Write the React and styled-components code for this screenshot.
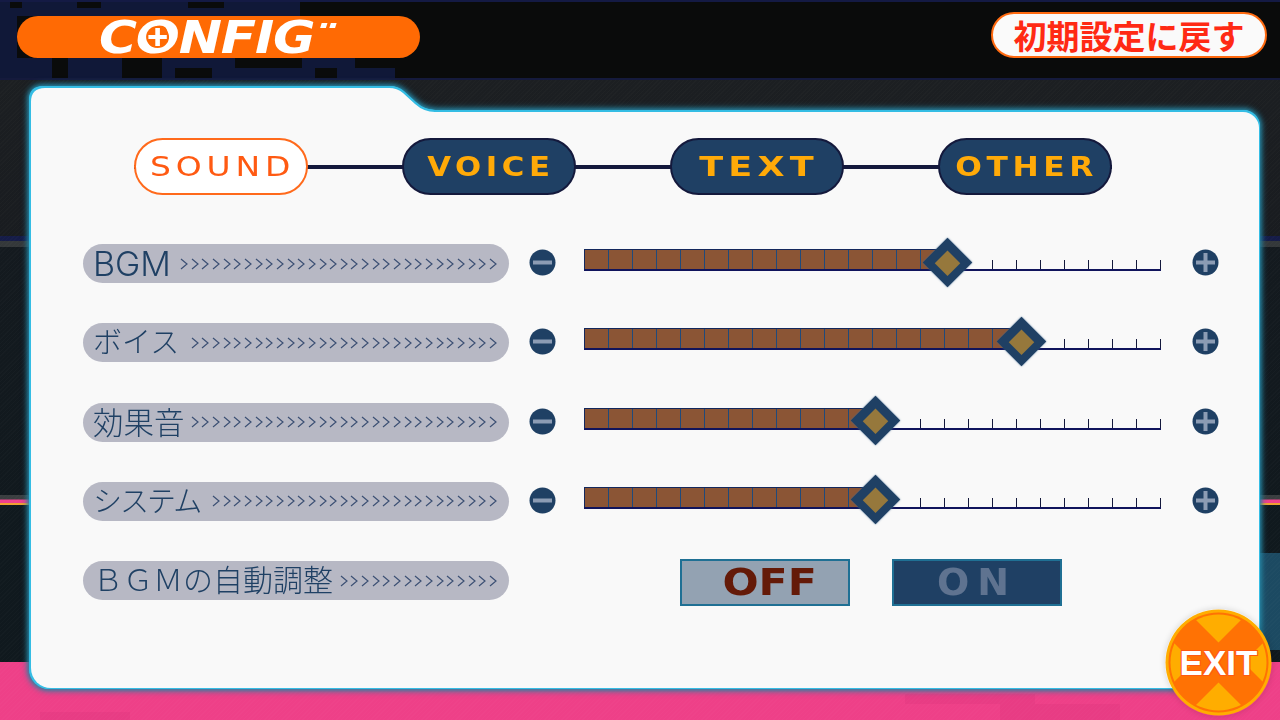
import React from 'react';
import styled, { createGlobalStyle } from 'styled-components';

const GlobalStyle = createGlobalStyle`
  html, body {
    margin: 0;
    padding: 0;
    background: #0a0b0b;
  }
`;

const Screen = styled.div`
  position: relative;
  width: 1280px;
  height: 720px;
  overflow: hidden;
  font-family: "Liberation Sans", "Noto Sans CJK JP", sans-serif;
`;

// decorative backdrop, everything in here sits behind the page
const Backdrop = styled.div`
  position: absolute;
  inset: 0;
  background: linear-gradient(
    to bottom,
    #141a44 0,
    #141a44 2px,
    #0a0b0b 2px,
    #0a0b0b 78px,
    #151a3c 78px,
    #151a3c 80px,
    #1c1f22 80px,
    #191c20 236px,
    #151c48 236px,
    #151c48 241px,
    #34383a 241px,
    #34383a 247px,
    #141a1f 247px,
    #11191e 495px,
    #3a3e40 495px,
    #3a3e40 499px,
    #f0408c 500px,
    #f0408c 503px,
    #f0a030 503px,
    #f0a030 505px,
    #10191e 505px,
    #10191e 662px,
    #ee4088 662px,
    #ee4088 720px
  );

  &::after {
    content: '';
    position: absolute;
    inset: 80px 0 0;
    background: repeating-linear-gradient(
      135deg,
      rgba(255, 255, 255, 0.015) 0,
      rgba(255, 255, 255, 0.015) 1px,
      transparent 1px,
      transparent 3px
    );
  }
`;

const Block = styled.div`
  position: absolute;
  left: ${(p) => p.$x}px;
  top: ${(p) => p.$y}px;
  width: ${(p) => p.$w}px;
  height: ${(p) => p.$h}px;
  background: ${(p) => p.$color || '#101838'};
`;

const Page = styled.div`
  position: relative;
  display: flex;
  flex-direction: column;
`;

const Header = styled.header`
  display: flex;
  justify-content: space-between;
  align-items: flex-start;
  padding: 12px 13px 0 17px;
  height: 76px;
  box-sizing: border-box;
`;

const TitleBar = styled.div`
  display: flex;
  align-items: center;
  justify-content: center;
  width: 403px;
  height: 42px;
  margin-top: 4px;
  border-radius: 21px;
  background: #ff6a04;
`;

const TitleText = styled.div`
  position: relative;
  font-family: "DejaVu Sans", sans-serif;
  font-weight: 700;
  font-style: italic;
  font-size: 45px;
  line-height: 42px;
  letter-spacing: -1px;
  color: #fff;
  transform: scaleX(1.15);
  margin-right: 24px;
  margin-top: 1px;
`;

const TitleLetter = styled.span`
  position: relative;
  display: inline-block;
`;

const PlusMark = styled.svg`
  position: absolute;
  left: 9px;
  top: 8px;
`;

const TitleTicks = styled.span`
  position: absolute;
  right: -11px;
  top: 6px;
  width: 5px;
  height: 5px;
  background: #fff;
  box-shadow: 8px 0 0 #fff;
  transform: skewX(-15deg);
`;

const Reset = styled.button`
  width: 276px;
  height: 46px;
  margin: 0;
  padding: 0;
  border: 2px solid #ff6a10;
  border-radius: 23px;
  background: #fafafa;
  box-sizing: border-box;
  color: #ff2a14;
  font-family: "Noto Sans CJK JP", sans-serif;
  font-weight: 700;
  font-size: 33px;
  line-height: 38px;
  white-space: nowrap;
`;

const PanelGlow = styled.div`
  width: 1228px;
  margin: 12px 0 0 31px;
  filter: drop-shadow(1.5px 0 0 #35bde4) drop-shadow(-1.5px 0 0 #35bde4)
    drop-shadow(0 1.5px 0 #35bde4) drop-shadow(0 -1.5px 0 #35bde4) drop-shadow(0 0 3px #2a8aa8)
    drop-shadow(0 0 2px #1f7a98);
`;

const PanelTab = styled.div`
  width: 404px;
  height: 24px;
  background: #f9f9f9;
  clip-path: path('M0 24 L0 14 Q0 0 14 0 L358 0 Q366 0 372 5 L384 16 Q393 24 404 24 Z');
`;

const Panel = styled.main`
  width: 1228px;
  height: 576px;
  box-sizing: border-box;
  padding: 26px 52px 0;
  background: #f9f9f9;
  border-radius: 0 16px 20px 20px;
`;

const Tabs = styled.nav`
  position: relative;
  display: flex;
  justify-content: space-between;
  width: 978px;
  margin-left: 51px;

  &::before {
    content: '';
    position: absolute;
    left: 0;
    right: 0;
    top: 27px;
    height: 4px;
    background: #14193c;
  }
`;

const Tab = styled.div`
  position: relative;
  width: 174px;
  height: 57px;
  box-sizing: border-box;
  padding-left: 4px;
  border-radius: 29px;
  text-align: center;
  font-family: "DejaVu Sans", sans-serif;
  font-size: 27px;
  line-height: 54px;
  letter-spacing: 4px;
  white-space: nowrap;
  font-weight: ${(p) => (p.$active ? 400 : 700)};
  color: ${(p) => (p.$active ? '#ff5a12' : '#ffaa08')};
  background: ${(p) => (p.$active ? '#fff' : '#1f4064')};
  border: 2px solid ${(p) => (p.$active ? '#ff6a1c' : '#14193c')};
`;

const TabLabel = styled.span`
  display: inline-block;
  transform: scaleX(${(p) => p.$stretch});
`;

const Rows = styled.div`
  display: flex;
  flex-direction: column;
  gap: 40.3px;
  margin-top: 49px;
`;

const Row = styled.div`
  display: flex;
  align-items: center;
  height: 39px;
`;

const Label = styled.div`
  display: flex;
  align-items: center;
  justify-content: space-between;
  flex: none;
  width: 426px;
  height: 39px;
  box-sizing: border-box;
  padding: 0 12px 0 10px;
  border-radius: 20px;
  background: #b7b8c4;
  overflow: hidden;
`;

const LabelText = styled.span`
  flex: none;
  font-family: Inter, "Noto Sans CJK JP", sans-serif;
  font-weight: 300;
  font-size: ${(p) => p.$size || 30}px;
  line-height: 39px;
  letter-spacing: ${(p) => p.$spacing || 0}px;
  color: #1f4064;
  white-space: nowrap;
`;

const Chevrons = styled.span`
  display: flex;
  flex: none;
  gap: 2.67px;
`;

const RoundButton = styled.div`
  flex: none;
  display: flex;
  width: 27px;
  height: 27px;
  margin-left: ${(p) => p.$left}px;
  margin-top: -2px;
`;

const Meter = styled.div`
  position: relative;
  flex: none;
  display: flex;
  align-items: flex-end;
  width: 577px;
  height: 22px;
  margin-left: 28px;
  margin-top: -7px;
  border-bottom: 2px solid #10145c;
  box-sizing: border-box;
`;

const Filled = styled.div`
  display: flex;
  flex: none;
  height: 20px;
  background: #8b5535;
  border: solid #14285c;
  border-width: 1px 0 0 1px;
  box-sizing: border-box;
`;

const Cell = styled.div`
  width: 24px;
  height: 100%;
  box-sizing: border-box;
  border-right: 1px solid #1f4a7c;
`;

const Tick = styled.div`
  flex: none;
  width: 24px;
  height: 9px;
  box-sizing: border-box;
  border-right: 1px solid #14193c;

  &:nth-child(2) {
    border-right: none;
  }
`;

const Knob = styled.div`
  position: absolute;
  top: -4.5px;
  left: ${(p) => p.$at}px;
  width: 35px;
  height: 35px;
  margin-left: -17.5px;
  background: #1f4064;
  box-shadow: 0 0 2px rgba(70, 110, 150, 0.8);
  transform: rotate(45deg);

  &::after {
    content: '';
    position: absolute;
    inset: 8.5px;
    background: #96783c;
  }
`;

const Toggle = styled.div`
  flex: none;
  width: 170px;
  height: 47px;
  margin-left: ${(p) => p.$left}px;
  margin-top: 4px;
  box-sizing: border-box;
  border: 2px solid #1f7094;
  text-align: center;
  font-family: "DejaVu Sans", sans-serif;
  font-weight: 700;
  font-size: 38px;
  line-height: 43px;
  white-space: nowrap;
  color: ${(p) => (p.$on ? '#5f7390' : '#641a08')};
  background: ${(p) => (p.$on ? '#1f4064' : '#93a2b2')};
  letter-spacing: ${(p) => (p.$on ? 8 : 0)}px;
`;

const ToggleLabel = styled.span`
  display: inline-block;
  transform: scaleX(${(p) => p.$stretch}) translateX(${(p) => p.$shift}px);
`;

const Exit = styled.div`
  position: absolute;
  left: 1165px;
  top: 609px;
  width: 107px;
  height: 107px;
  border-radius: 50%;
  box-shadow: 0 0 6px rgba(0, 0, 0, 0.15);
`;

const ExitText = styled.div`
  position: absolute;
  left: 0;
  right: 0;
  top: 34px;
  text-align: center;
  font-family: "Liberation Sans", sans-serif;
  font-weight: 700;
  font-size: 35px;
  line-height: 40px;
  color: #fff;
  text-shadow: 1px 1px 0 #ff5a12, -1px -1px 0 #ff5a12, 1px -1px 0 #ff5a12, -1px 1px 0 #ff5a12;
`;

const topBlocks = [
  [0, 2, 10, 14],
  [22, 2, 55, 14],
  [101, 2, 87, 14],
  [224, 2, 76, 6],
  [0, 8, 300, 8],
  [0, 16, 17, 44],
  [0, 58, 52, 20],
  [68, 58, 54, 20],
  [162, 58, 73, 10],
  [162, 68, 13, 10],
  [212, 68, 103, 10],
  [302, 58, 53, 10],
  [337, 68, 58, 10],
];

const pinkBlocks = [
  [905, 694, 130, 10],
  [1000, 704, 120, 16],
  [40, 712, 90, 8],
];

const MinusIcon = () => (
  <svg width="27" height="27" viewBox="0 0 27 27">
    <circle cx="13.5" cy="13.5" r="13" fill="#1f4064" />
    <rect x="4" y="11.5" width="19" height="4" fill="#8c9cb4" />
  </svg>
);

const PlusIcon = () => (
  <svg width="27" height="27" viewBox="0 0 27 27">
    <circle cx="13.5" cy="13.5" r="13" fill="#1f4064" />
    <rect x="4" y="11.5" width="19" height="4" fill="#8c9cb4" />
    <rect x="11.5" y="4" width="4" height="19" fill="#8c9cb4" />
  </svg>
);

const Chevron = () => (
  <svg width="8" height="12" viewBox="0 0 8 12">
    <path d="M1 1 L7 6 L1 11" fill="none" stroke="#3c5074" strokeWidth="1.2" />
  </svg>
);

const ExitBadge = () => (
  <svg width="107" height="107" viewBox="0 0 107 107">
    <clipPath id="exit-inner">
      <circle cx="53.5" cy="53.5" r="48" />
    </clipPath>
    <circle cx="53.5" cy="53.5" r="53" fill="#ffad00" />
    <circle cx="53.5" cy="53.5" r="50" fill="#ff7204" />
    <g clipPath="url(#exit-inner)">
      <path
        d="M53.5 33.5 L23.5 3.5 L83.5 3.5 Z M53.5 73.5 L23.5 103.5 L83.5 103.5 Z M28.5 53.5 L3.5 28.5 L3.5 78.5 Z M78.5 53.5 L103.5 28.5 L103.5 78.5 Z"
        fill="#ffad00"
      />
    </g>
  </svg>
);

const sliders = [
  { label: 'BGM', size: 34, chevrons: 30, value: 15, knob: 363 },
  { label: 'ボイス', size: 29, chevrons: 29, value: 18, knob: 437 },
  { label: '効果音', size: 30.5, chevrons: 29, value: 12, knob: 291 },
  { label: 'システム', size: 29, spacing: -2, chevrons: 27, value: 12, knob: 291 },
];

const STEPS = 24;

const ChevronRun = ({ count }) => (
  <Chevrons>
    {Array.from({ length: count }).map((_, i) => (
      <Chevron key={i} />
    ))}
  </Chevrons>
);

const Slider = ({ value, knob }) => (
  <Meter>
    <Filled>
      {Array.from({ length: value }).map((_, i) => (
        <Cell key={i} />
      ))}
    </Filled>
    {Array.from({ length: STEPS - value }).map((_, i) => (
      <Tick key={i} />
    ))}
    <Knob $at={knob} />
  </Meter>
);

const App = () => {
  return (
    <Screen>
      <GlobalStyle />
      <Backdrop>
        {topBlocks.map(([x, y, w, h], i) => (
          <Block key={i} $x={x} $y={y} $w={w} $h={h} />
        ))}
        <Block $x={1260} $y={553} $w={20} $h={97} $color="#1c4a62" />
        {pinkBlocks.map(([x, y, w, h], i) => (
          <Block key={i} $x={x} $y={y} $w={w} $h={h} $color="#e83c84" />
        ))}
      </Backdrop>
      <Page>
        <Header>
          <TitleBar>
            <TitleText>
              C
              <TitleLetter>
                O
                <PlusMark width="20" height="24" viewBox="0 0 20 24">
                  <ellipse cx="10" cy="12" rx="10" ry="11" fill="#ff6a04" />
                  <rect x="2" y="10" width="16" height="4" fill="#fff" />
                  <rect x="8" y="3" width="4" height="18" fill="#fff" />
                </PlusMark>
              </TitleLetter>
              NFIG
              <TitleTicks />
            </TitleText>
          </TitleBar>
          <Reset>初期設定に戻す</Reset>
        </Header>
        <PanelGlow>
          <PanelTab />
          <Panel>
            <Tabs>
              <Tab $active>
                <TabLabel $stretch={1.22}>SOUND</TabLabel>
              </Tab>
              <Tab>
                <TabLabel $stretch={1.14}>VOICE</TabLabel>
              </Tab>
              <Tab>
                <TabLabel $stretch={1.3}>TEXT</TabLabel>
              </Tab>
              <Tab>
                <TabLabel $stretch={1.16}>OTHER</TabLabel>
              </Tab>
            </Tabs>
            <Rows>
              {sliders.map((s) => (
                <Row key={s.label}>
                  <Label>
                    <LabelText $size={s.size} $spacing={s.spacing}>
                      {s.label}
                    </LabelText>
                    <ChevronRun count={s.chevrons} />
                  </Label>
                  <RoundButton $left={20}>
                    <MinusIcon />
                  </RoundButton>
                  <Slider value={s.value} knob={s.knob} />
                  <RoundButton $left={31}>
                    <PlusIcon />
                  </RoundButton>
                </Row>
              ))}
              <Row>
                <Label>
                  <LabelText $size={30}>ＢＧＭの自動調整</LabelText>
                  <ChevronRun count={15} />
                </Label>
                <Toggle $left={171}>
                  <ToggleLabel $stretch={1.12} $shift={4}>
                    OFF
                  </ToggleLabel>
                </Toggle>
                <Toggle $left={42} $on>
                  <ToggleLabel $stretch={1} $shift={0}>
                    ON
                  </ToggleLabel>
                </Toggle>
              </Row>
            </Rows>
          </Panel>
        </PanelGlow>
      </Page>
      <Exit>
        <ExitBadge />
        <ExitText>EXIT</ExitText>
      </Exit>
    </Screen>
  );
};

export default App;
